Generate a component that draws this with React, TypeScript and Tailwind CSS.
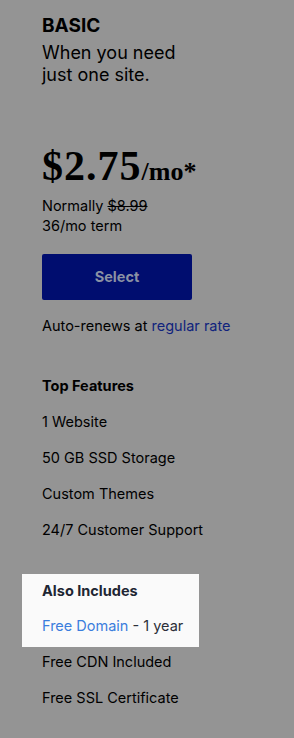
const features = ["1 Website", "50 GB SSD Storage", "Custom Themes", "24/7 Customer Support"];

export default function App() {
  return (
    <div className="min-h-[738px] w-full bg-[#949494] text-black font-['Inter','Liberation_Sans',sans-serif] pb-8">
      <div className="pl-[42px] pt-[14px]">
        <h2 className="text-[19px] leading-[24px] font-bold">BASIC</h2>
        <p className="mt-[4px] text-[18px] leading-[22px] w-[150px]">When you need just one site.</p>

        <div className="mt-[58px] flex items-baseline font-['Liberation_Serif',serif] font-bold">
          <span className="text-[42px] leading-[44px] tracking-[1px]">$2.75</span>
          <span className="text-[26px] leading-[30px]">/mo*</span>
        </div>
        <p className="mt-[8px] text-[14.5px] leading-[20px]">
          Normally <span className="line-through">$8.99</span>
        </p>
        <p className="text-[14.5px] leading-[20px]">36/mo term</p>

        <button className="mt-[18px] w-[150px] h-[46px] rounded-[2px] bg-[#000d6f] text-[#8a91a4] text-[14.5px] font-bold">
          Select
        </button>
        <p className="mt-[16px] text-[14.5px] leading-[20px]">
          Auto-renews at <span className="text-[#10237d]">regular rate</span>
        </p>

        <h3 className="mt-[40px] text-[14.5px] leading-[20px] font-bold">Top Features</h3>
        <ul className="mt-[16px] flex flex-col gap-[16px] text-[14.5px] leading-[20px]">
          {features.map((f) => (
            <li key={f}>{f}</li>
          ))}
        </ul>
      </div>

      <div className="mt-[34px] ml-[22px] w-[177px] bg-[#fafafa] pl-[20px] pt-[7px] pb-[11px]">
        <h3 className="text-[14.5px] leading-[20px] font-bold text-[#1e2633]">Also Includes</h3>
        <p className="mt-[15px] text-[14.5px] leading-[20px] text-[#2b2f38]">
          <span className="text-[#3b7ddd]">Free Domain</span> - 1 year
        </p>
      </div>
      <ul className="pl-[42px] mt-[5px] flex flex-col gap-[16px] text-[14.5px] leading-[20px]">
        <li>Free CDN Included</li>
        <li>Free SSL Certificate</li>
      </ul>
    </div>
  );
}
